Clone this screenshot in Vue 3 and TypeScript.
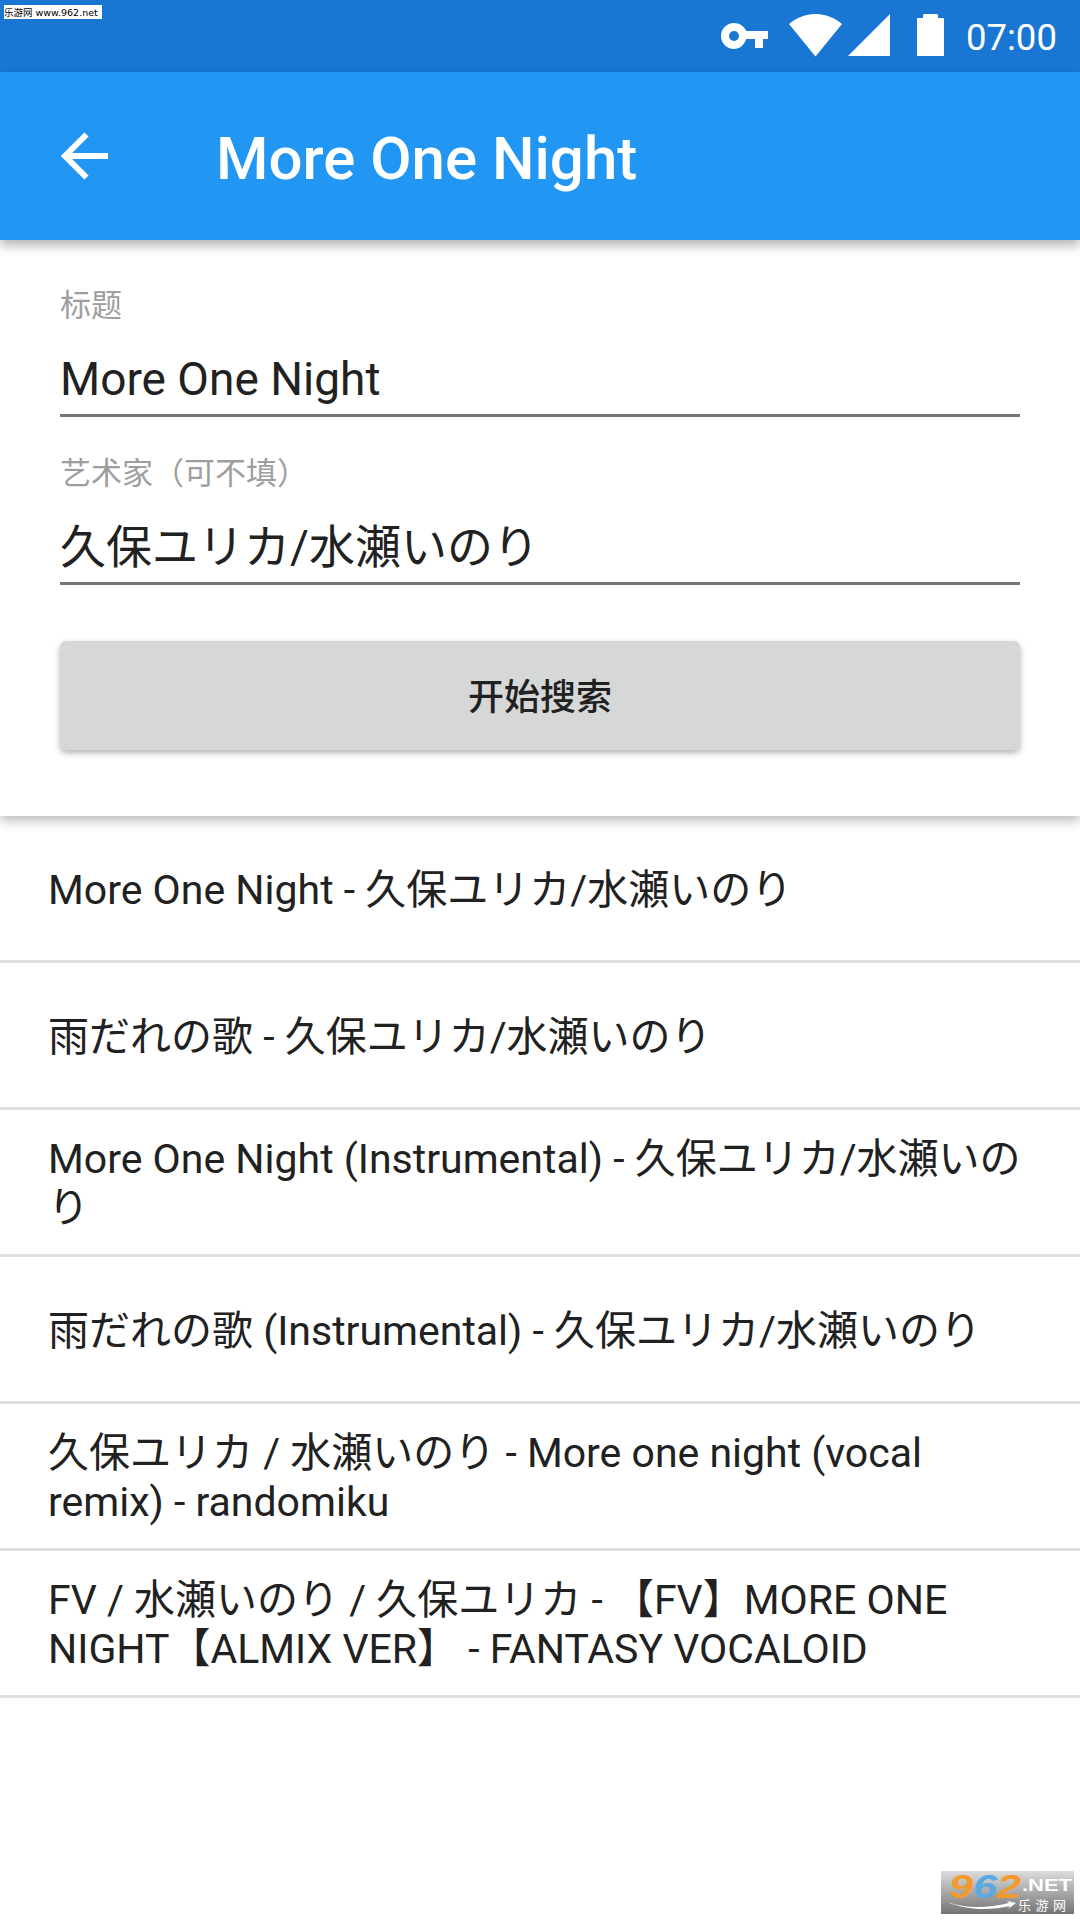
<script setup lang="ts">
const rows: string[] = [
  'More One Night - 久保ユリカ/水瀬いのり',
  '雨だれの歌 - 久保ユリカ/水瀬いのり',
  'More One Night (Instrumental) - 久保ユリカ/水瀬いのり',
  '雨だれの歌 (Instrumental) - 久保ユリカ/水瀬いのり',
  '久保ユリカ / 水瀬いのり - More one night (vocal remix) - randomiku',
  'FV / 水瀬いのり / 久保ユリカ - 【FV】MORE ONE NIGHT【ALMIX VER】 - FANTASY VOCALOID',
]
</script>

<template>
  <div class="page">
    <div class="status">
      <svg class="key" width="47" height="26" viewBox="0 0 47 26">
        <path fill="#fff" fill-rule="evenodd" d="M13 0C18.600 0 23.300 3.300 25.200 8H47v8h-5v9h-8v-9h-8.800C23.300 22 18.600 26 13 26 5.800 26 0 20.200 0 13S5.800 0 13 0Zm0 8a5 5 0 1 0 0 10 5 5 0 0 0 0-10Z" />
      </svg>
      <svg class="wifi" width="53" height="43" viewBox="0 0 53 43">
        <path fill="#fff" d="M26.500 42.500 0 10C7.500 3.800 16.500 0 26.500 0S45.500 3.800 53 10Z" />
      </svg>
      <svg class="signal" width="43" height="43" viewBox="0 0 43 43">
        <path fill="#fff" d="M0 42 42 0v42Z" />
      </svg>
      <svg class="battery" width="27" height="43" viewBox="0 0 27 43">
        <path fill="#fff" d="M6 4V1l1-1h13l1 1v3h6v38H0V4Z" />
      </svg>
      <span class="time">07:00</span>
    </div>

    <header class="appbar">
      <svg class="back" width="50" height="48" viewBox="0 0 50 48">
        <path fill="none" stroke="#fff" stroke-width="6" d="M48 24H5M26.500 2.500 5 24l21.500 21.500" />
      </svg>
      <h1 class="title">More One Night</h1>
    </header>

    <section class="form">
      <label class="field">
        <span class="label">标题</span>
        <span class="value">More One Night</span>
      </label>
      <label class="field">
        <span class="label">艺术家（可不填）</span>
        <span class="value">久保ユリカ/水瀬いのり</span>
      </label>
      <button class="search" type="button">开始搜索</button>
    </section>

    <ul class="list">
      <li v-for="row in rows" :key="row" class="row">
        <span>{{ row }}</span>
      </li>
    </ul>

    <div class="mark-top"><span class="mark-cn">乐游网</span> www.962.net</div>
    <svg class="mark-logo" width="133" height="43" viewBox="0 0 133 43">
      <defs>
        <linearGradient id="logoBg" x1="0" y1="0" x2="0" y2="1">
          <stop offset="0" stop-color="#dcdcdc" />
          <stop offset="0.5" stop-color="#a8a8a8" />
          <stop offset="1" stop-color="#747474" />
        </linearGradient>
      </defs>
      <rect width="133" height="43" fill="url(#logoBg)" />
      <text class="digits" x="8" y="27" fill="#f39a2d" textLength="24" lengthAdjust="spacingAndGlyphs">9</text>
      <text class="digits" x="32" y="27" fill="#5aa9e0" textLength="24" lengthAdjust="spacingAndGlyphs">6</text>
      <text class="digits" x="56" y="27" fill="#f39a2d" textLength="24" lengthAdjust="spacingAndGlyphs">2</text>
      <text class="net" x="81" y="20" fill="#fff" textLength="50" lengthAdjust="spacingAndGlyphs">.NET</text>
      <text class="cn" x="77" y="38.500" fill="#fff" textLength="48">乐游网</text>
      <path fill="#fff" d="M6 31c20 7 40 6 62 1l-2-2 9 2-8 6 2-3c-22 5-44 4-63-4Z" />
    </svg>
  </div>
</template>

<style>
html, body { margin: 0; background: #fff; }
</style>

<style scoped>
.page {
  position: relative;
  width: 1080px;
  height: 1920px;
  overflow: hidden;
  background: #fff;
  display: flex;
  flex-direction: column;
  font-family: Roboto, "Noto Sans CJK JP", sans-serif;
  color: #212121;
}
.status {
  height: 72px;
  flex: none;
  box-sizing: border-box;
  background: #1976d2;
  display: flex;
  align-items: center;
  padding-left: 721px;
  position: relative;
}
.wifi { margin-left: 21px; margin-top: -1px; }
.signal { margin-left: 6px; margin-top: -1px; }
.battery { margin-left: 26px; margin-top: -1px; }
.time {
  margin-left: 22px;
  padding-top: 4px;
  font-size: 36.500px;
  color: #fff;
  line-height: 68px;
}
.appbar {
  height: 168px;
  flex: none;
  background: #2196f3;
  display: flex;
  align-items: center;
  box-shadow: 0 6px 10px rgba(0, 0, 0, 0.28);
  position: relative;
  z-index: 2;
}
.back { margin-left: 60px; }
.title {
  margin: 5px 0 0 106px;
  font-size: 60px;
  font-weight: 500;
  color: #fff;
  line-height: 72px;
}
.form {
  height: 576px;
  flex: none;
  box-sizing: border-box;
  padding: 45px 60px 0;
  display: flex;
  flex-direction: column;
  background: #fff;
  box-shadow: 0 5px 10px rgba(0, 0, 0, 0.26);
  position: relative;
  z-index: 1;
}
.field {
  display: flex;
  flex-direction: column;
  height: 129px;
  border-bottom: 3px solid #757575;
  margin-bottom: 36px;
}
.label {
  margin-top: 1px;
  font-size: 31px;
  line-height: 40px;
  color: #9e9e9e;
  font-family: Roboto, "Noto Sans CJK SC", sans-serif;
}
.value {
  font-size: 46px;
  line-height: 60px;
  margin-top: 23px;
  color: #212121;
}
.search {
  margin-top: 20px;
  height: 109px;
  flex: none;
  border: 0;
  padding: 0 0 3px;
  border-radius: 6px;
  background: #d6d7d7;
  box-shadow: 0 3px 6px rgba(0, 0, 0, 0.3);
  font-family: Roboto, "Noto Sans CJK SC", sans-serif;
  font-size: 36px;
  font-weight: 500;
  color: #212121;
}
.list {
  list-style: none;
  margin: 0;
  padding: 0;
}
.row {
  height: 140px;
  border-bottom: 3px solid #e0e0e0;
  display: flex;
  align-items: center;
  padding: 4px 48px 0;
  font-size: 41px;
  line-height: 49px;
  color: #212121;
}
.mark-top {
  position: absolute;
  left: 4px;
  top: 5px;
  width: 98px;
  height: 14px;
  background: #fff;
  color: #000;
  font-family: "DejaVu Sans", "Noto Sans CJK SC", sans-serif;
  font-size: 9.500px;
  line-height: 14px;
  white-space: nowrap;
  overflow: hidden;
}
.mark-cn { font-family: "Noto Sans CJK SC", sans-serif; }
.mark-logo {
  position: absolute;
  left: 941px;
  top: 1871px;
  overflow: visible;
}
.digits {
  font-family: "Liberation Sans", sans-serif;
  font-size: 34px;
  font-weight: 700;
  font-style: italic;
}
.net {
  font-family: "Liberation Sans", sans-serif;
  font-size: 16px;
  font-weight: 700;
}
.cn {
  font-family: "Noto Sans CJK SC", sans-serif;
  font-size: 13px;
}
</style>
